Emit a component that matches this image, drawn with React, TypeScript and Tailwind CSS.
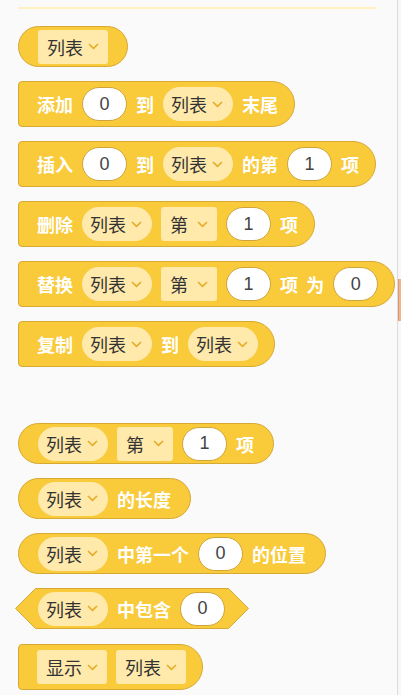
import React from 'react';

const FONT = { fontFamily: '"Noto Sans CJK SC", "Noto Sans", sans-serif' };

const Chevron: React.FC = () => (
  <svg width="11" height="7" viewBox="0 0 11 7" className="shrink-0">
    <path d="M1.5 1.5 L5.5 5.3 L9.5 1.5" fill="none" stroke="#e6ad2c" strokeWidth="1.7" strokeLinecap="round" strokeLinejoin="round" />
  </svg>
);

// rounded pill dropdown (list picker)
const Pill: React.FC<{ label: string }> = ({ label }) => (
  <div className="flex items-center justify-between h-[34px] w-[70px] pl-[8px] pr-[10px] rounded-full bg-[#ffe9ab] text-[#333] text-[18px]">
    <span className="leading-none">{label}</span>
    <Chevron />
  </div>
);

// square dropdown (menu)
const Menu: React.FC<{ label: string; w?: string }> = ({ label, w = 'w-[56px]' }) => (
  <div className={`flex items-center justify-between h-[34px] ${w} pl-[9px] pr-[9px] rounded-[3px] bg-[#ffe9ab] text-[#333] text-[18px]`}>
    <span className="leading-none">{label}</span>
    <Chevron />
  </div>
);

const Num: React.FC<{ v: string }> = ({ v }) => (
  <div className="flex items-center justify-center h-[34px] w-[45px] rounded-full bg-white border border-[#cfa53a] text-[#444] text-[18px]" style={{ fontFamily: '"Liberation Sans", sans-serif' }}>
    {v}
  </div>
);

const T: React.FC<{ children: React.ReactNode }> = ({ children }) => (
  <span className="text-white font-bold text-[18px] leading-none whitespace-pre">{children}</span>
);

const Stack: React.FC<{ children: React.ReactNode }> = ({ children }) => (
  <div className="self-start flex items-center gap-[9px] h-[46px] pl-[18px] pr-[16px] bg-[#f9ca3a] border border-[#d6a935] rounded-l-[4px] rounded-r-[23px]">
    {children}
  </div>
);

const Reporter: React.FC<{ children: React.ReactNode }> = ({ children }) => (
  <div className="self-start flex items-center gap-[9px] h-[41px] pl-[19px] pr-[19px] bg-[#f9ca3a] border border-[#d6a935] rounded-full">
    {children}
  </div>
);

const Boolean: React.FC<{ children: React.ReactNode }> = ({ children }) => (
  <div className="relative self-start -ml-[3px] w-[234px] h-[41px]">
    <svg className="absolute inset-0" width="234" height="41" viewBox="0 0 234 41">
      <polygon points="20.5,0.5 213.5,0.5 233.5,20.5 213.5,40.5 20.5,40.5 0.5,20.5" fill="#f9ca3a" stroke="#d6a935" strokeWidth="1" />
    </svg>
    <div className="relative flex items-center gap-[9px] h-full pl-[23px]">{children}</div>
  </div>
);

export default function App() {
  return (
    <div className="w-[401px] h-[695px] flex overflow-hidden bg-[#fafafa]" style={FONT}>
      <div className="flex-1 pl-[18px]">
        <div className="mt-[7px] w-[359px] h-[2px] bg-[#fff1c2]" />
        <div className="flex flex-col gap-[14px] mt-[17px]">
          <Reporter>
            <Menu label="列表" w="w-[70px]" />
          </Reporter>
          <Stack>
            <T>添加</T>
            <Num v="0" />
            <T>到</T>
            <Pill label="列表" />
            <T>末尾</T>
          </Stack>
          <Stack>
            <T>插入</T>
            <Num v="0" />
            <T>到</T>
            <Pill label="列表" />
            <T>的第</T>
            <Num v="1" />
            <T>项</T>
          </Stack>
          <Stack>
            <T>删除</T>
            <Pill label="列表" />
            <Menu label="第" />
            <Num v="1" />
            <T>项</T>
          </Stack>
          <Stack>
            <T>替换</T>
            <Pill label="列表" />
            <Menu label="第" />
            <Num v="1" />
            <T>项  为</T>
            <Num v="0" />
          </Stack>
          <Stack>
            <T>复制</T>
            <Pill label="列表" />
            <T>到</T>
            <Pill label="列表" />
          </Stack>

          <div className="h-[28px]" />

          <Reporter>
            <Pill label="列表" />
            <Menu label="第" />
            <Num v="1" />
            <T>项</T>
          </Reporter>
          <Reporter>
            <Pill label="列表" />
            <T>的长度</T>
          </Reporter>
          <Reporter>
            <Pill label="列表" />
            <T>中第一个</T>
            <Num v="0" />
            <T>的位置</T>
          </Reporter>
          <div className="flex flex-col gap-[15px]">
            <Boolean>
              <Pill label="列表" />
              <T>中包含</T>
              <Num v="0" />
            </Boolean>
            <Stack>
              <Menu label="显示" w="w-[70px]" />
              <Menu label="列表" w="w-[70px]" />
            </Stack>
          </div>
        </div>
      </div>
      <div className="w-[4px] h-full border-l border-[#dcdcdc] bg-[#f7f7f7] flex flex-col">
        <div className="mt-[279px] h-[42px] bg-[#f3b38d] border-l border-[#d99a75]" />
      </div>
    </div>
  );
}
